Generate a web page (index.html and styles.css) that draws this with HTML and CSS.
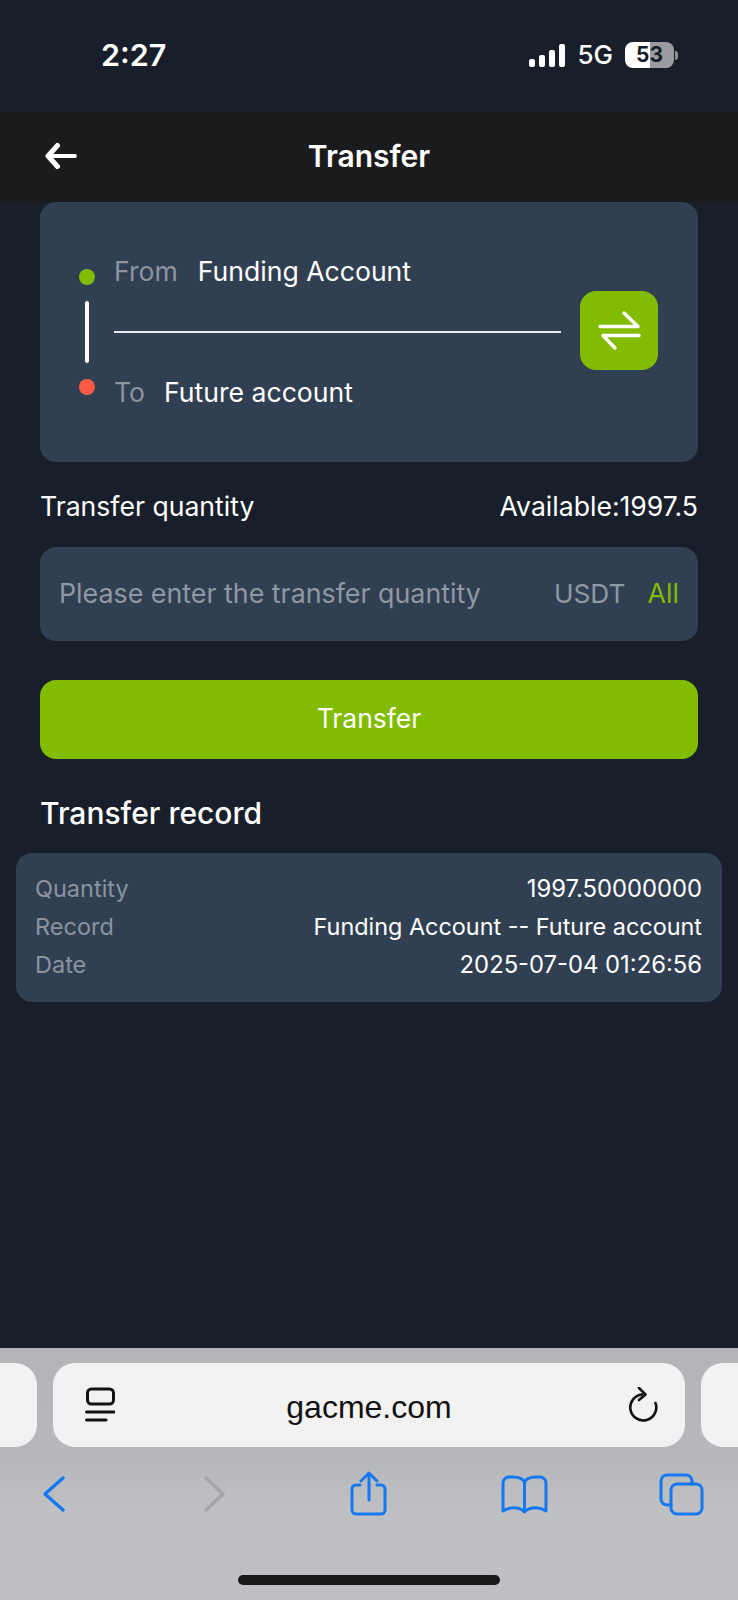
FILE: index.html
```html
<!DOCTYPE html>
<html lang="en">
<head>
<meta charset="utf-8">
<title>Transfer</title>
<link rel="stylesheet" href="styles.css">
</head>
<body>
<div class="phone">
  <div class="status">
    <span class="time">2:27</span>
    <div class="status-right">
      <div class="signal"><i class="b1"></i><i class="b2"></i><i class="b3"></i><i class="b4"></i></div>
      <span class="net">5G</span>
      <div class="battery"><span>53</span></div>
      <i class="nub"></i>
    </div>
  </div>
  <header class="nav">
    <svg class="nav-back" width="34" height="34" viewBox="0 0 34 34" fill="none" stroke="#fff" stroke-linecap="round" stroke-linejoin="round"><path stroke-width="3.800" d="M30 17H6"/><path stroke-width="5" d="M12.500 6.500 3 17l9.500 10.500"/></svg>
    <h1 class="nav-title">Transfer</h1>
  </header>
  <main class="main">
    <section class="route">
      <div class="rail">
        <i class="dot dot-green"></i>
        <i class="rail-line"></i>
        <i class="dot dot-red"></i>
      </div>
      <div class="accounts">
        <div class="acct acct-from"><span class="acct-label">From</span><span class="acct-name">Funding Account</span></div>
        <div class="acct-divider"></div>
        <div class="acct acct-to"><span class="acct-label">To</span><span class="acct-name">Future account</span></div>
      </div>
      <div class="swap">
        <svg width="78" height="79" viewBox="0 0 78 79" fill="none" stroke="#fff" stroke-width="3.500" stroke-linecap="round" stroke-linejoin="round"><path d="M20 35.500H58L44 22"/><path d="M59 44.500H23L35 57"/></svg>
      </div>
    </section>
    <div class="qty-head"><span>Transfer quantity</span><span>Available:1997.5</span></div>
    <div class="qty-input">
      <span class="placeholder">Please enter the transfer quantity</span>
      <span class="unit">USDT</span>
      <span class="all">All</span>
    </div>
    <button class="submit">Transfer</button>
    <h2 class="rec-title">Transfer record</h2>
    <section class="rec-card">
      <div class="rec-row rec-digits"><span class="rec-key">Quantity</span><span>1997.50000000</span></div>
      <div class="rec-row"><span class="rec-key">Record</span><span>Funding Account -- Future account</span></div>
      <div class="rec-row rec-digits"><span class="rec-key">Date</span><span>2025-07-04 01:26:56</span></div>
    </section>
  </main>
  <footer class="safari">
    <div class="url-row">
      <div class="pill pill-side pill-left"></div>
      <div class="pill pill-main">
        <svg width="30" height="36" viewBox="0 0 30 36" fill="none" stroke="#111" stroke-width="3" stroke-linecap="round"><rect x="2.500" y="2" width="26" height="15" rx="4"/><path d="M1.500 25H29M1.500 33H21"/></svg>
        <span class="url">gacme.com</span>
        <svg width="30" height="36" viewBox="0 0 30 36" fill="none" stroke="#111" stroke-width="2.600" stroke-linecap="round" stroke-linejoin="round"><path d="M13 7.500A13 13 0 1 0 26.500 16"/><path d="M10 1 16.500 7.500 10 13"/></svg>
      </div>
      <div class="pill pill-side pill-right"></div>
    </div>
    <div class="toolbar">
      <svg width="60" height="48" viewBox="0 0 60 48" fill="none" stroke="#1479f0" stroke-width="3.400" stroke-linecap="round" stroke-linejoin="round"><path d="M39 8 21 24l18 16"/></svg>
      <svg width="60" height="48" viewBox="0 0 60 48" fill="none" stroke="#a4a5a9" stroke-width="3.400" stroke-linecap="round" stroke-linejoin="round"><path d="M25 8l17 16-17 16"/></svg>
      <svg width="60" height="48" viewBox="0 0 60 48" fill="none" stroke="#1479f0" stroke-width="3" stroke-linecap="round" stroke-linejoin="round"><path d="M22 15h-4a4 4 0 0 0-4 4v21a4 4 0 0 0 4 4h25a4 4 0 0 0 4-4V19a4 4 0 0 0-4-4h-4"/><path d="M31 30V3M23 11l8-8 8 8"/></svg>
      <svg width="60" height="48" viewBox="0 0 60 48" fill="none" stroke="#1479f0" stroke-width="3" stroke-linecap="round" stroke-linejoin="round"><path d="M30.500 14C30.500 9 25 7 19 7h-4a6 6 0 0 0-6 6v28c6-4 16-5 21.500 1 5.500-6 15.500-5 21.500-1V13a6 6 0 0 0-6-6h-4C36 7 30.500 9 30.500 14v28"/></svg>
      <svg width="60" height="48" viewBox="0 0 60 48" fill="none" stroke="#1479f0" stroke-width="3" stroke-linecap="round" stroke-linejoin="round"><rect x="20" y="14" width="31" height="30" rx="6"/><path d="M20 35h-4a6 6 0 0 1-6-6V11a6 6 0 0 1 6-6h19a6 6 0 0 1 6 6v3"/></svg>
    </div>
    <div class="home-bar"></div>
  </footer>
</div>
</body>
</html>
```

FILE: styles.css
```css
* { box-sizing: border-box; margin: 0; padding: 0; }
html, body { width: 738px; height: 1600px; overflow: hidden; }
body { background: #181f2b; font-family: Inter, "Liberation Sans", sans-serif; color: #fff; }
i { display: block; }

.phone { width: 738px; height: 1600px; display: flex; flex-direction: column; }

.status { height: 112px; flex: none; display: flex; justify-content: space-between; align-items: flex-start; padding: 37px 60px 0 101px; }
.time { font-size: 30.500px; font-weight: 600; line-height: 36px; }
.status-right { display: flex; align-items: center; margin-top: 5px; height: 26px; }
.signal { display: flex; align-items: flex-end; gap: 4px; height: 23px; margin-right: 12px; margin-top: 1px; }
.signal i { width: 6px; background: #fff; border-radius: 2px; }
.b1 { height: 8px; }
.b2 { height: 12px; }
.b3 { height: 17px; }
.b4 { height: 23px; }
.net { font-size: 26px; font-weight: 500; line-height: 26px; margin-right: 12px; }
.battery { width: 49px; height: 26px; border-radius: 8px; background: linear-gradient(90deg, #fff 51%, #9a9b9e 51%); color: #161c27; font-size: 21px; font-weight: 700; line-height: 26px; text-align: center; }
.nub { width: 3px; height: 9px; margin-left: 1px; background: #8d8f93; border-radius: 0 3px 3px 0; }

.nav { height: 90px; flex: none; background: #1a1b1d; display: flex; align-items: center; justify-content: center; position: relative; }
.nav-back { position: absolute; left: 45px; top: 27px; }
.nav-title { font-size: 30px; font-weight: 600; line-height: 36px; margin-bottom: 2px; }

.main { flex: 1; padding: 0 40px; min-height: 0; }

.route { height: 260px; background: #313f52; border-radius: 16px; display: flex; align-items: flex-start; padding: 0 39px 0 39px; }
.rail { width: 16px; margin-top: 67px; margin-right: 19px; display: flex; flex-direction: column; align-items: center; }
.dot { width: 16px; height: 16px; border-radius: 50%; }
.dot-green { background: #82bc00; }
.dot-red { background: #ff5a45; margin-top: 16px; }
.rail-line { width: 4px; height: 62px; margin-top: 16px; background: #fff; border-radius: 2px; }
.accounts { width: 447px; margin-top: 51px; }
.acct { display: flex; align-items: center; height: 36px; font-size: 26.600px; line-height: 36px; }
.acct-label { color: #8c94a0; margin-right: 20px; }
.acct-to .acct-label { margin-right: 19px; }
.acct-divider { height: 2px; margin: 42px 0 41px; background: #e6eaf0; }
.swap { width: 78px; height: 79px; margin-top: 89px; margin-left: 19px; background: #82bc00; border-radius: 16px; flex: none; }
.swap svg { display: block; }

.qty-head { display: flex; justify-content: space-between; margin-top: 28px; font-size: 26.600px; line-height: 32px; }
.qty-input { height: 94px; margin-top: 25px; background: #313f52; border-radius: 16px; display: flex; align-items: center; padding: 0 19px 2px; font-size: 26.800px; }
.placeholder { color: #8f98a3; flex: 1; }
.unit { color: #8f98a3; margin-right: 22px; font-size: 26.300px; }
.all { color: #82bc00; }
.submit { display: block; width: 100%; height: 79px; margin-top: 39px; padding-bottom: 3px; border: 0; border-radius: 16px; background: #82bc00; color: #fff; font: 400 26.500px Inter, "Liberation Sans", sans-serif; }
.rec-title { font-size: 30px; font-weight: 500; line-height: 36px; margin-top: 36px; }
.rec-card { margin: 22px -24px 0; height: 149px; padding: 17px 20px 0 19px; background: #313f52; border-radius: 16px; }
.rec-row { display: flex; justify-content: space-between; height: 38px; font-size: 23.400px; line-height: 38px; }
.rec-digits { font-size: 23.800px; }
.rec-key { color: #8c94a0; font-size: 23.500px; }

.safari { height: 252px; flex: none; background: linear-gradient(#b3b4b7 0, #b7b8bb 115px, #bfc0c4 160px); position: relative; }
.url-row { display: flex; gap: 16px; padding-top: 15px; height: 99px; overflow: hidden; }
.pill { height: 84px; background: #f2f2f2; border-radius: 22px; flex: none; }
.pill-side { width: 80px; }
.pill-left { margin-left: -43px; }
.pill-main { width: 632px; display: flex; align-items: center; justify-content: space-between; padding: 0 26px 0 32px; color: #111; }
.url { font-family: "Liberation Sans", sans-serif; font-size: 32px; padding-top: 4px; margin-right: 6px; }
.toolbar { display: flex; justify-content: space-between; padding: 23px 27px 0 24px; }
.toolbar svg { display: block; }
.home-bar { position: absolute; left: 238px; bottom: 15px; width: 262px; height: 10px; background: #19191b; border-radius: 5px; }
```
